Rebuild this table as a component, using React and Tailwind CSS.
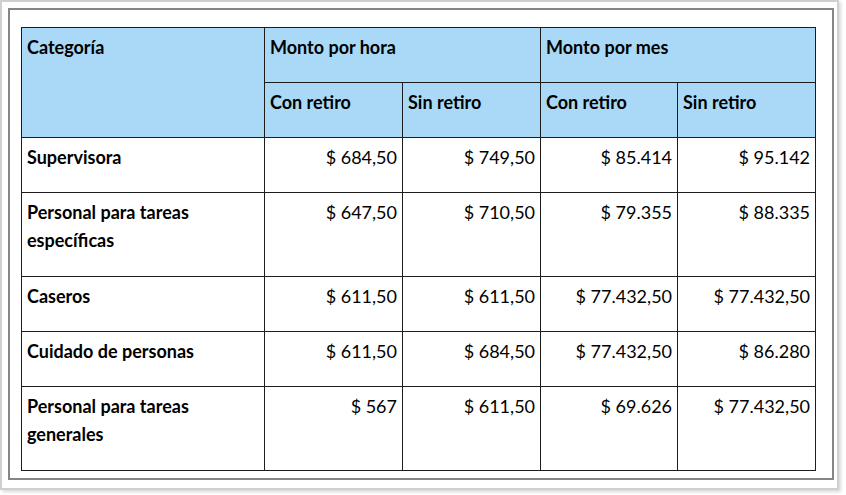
export default function App() {
  const rows = [
    { c: ["Supervisora"], v: ["$ 684,50", "$ 749,50", "$ 85.414", "$ 95.142"], h: "h-[55px]" },
    { c: ["Personal para tareas", "específicas"], v: ["$ 647,50", "$ 710,50", "$ 79.355", "$ 88.335"], h: "h-[84px]" },
    { c: ["Caseros"], v: ["$ 611,50", "$ 611,50", "$ 77.432,50", "$ 77.432,50"], h: "h-[55px]" },
    { c: ["Cuidado de personas"], v: ["$ 611,50", "$ 684,50", "$ 77.432,50", "$ 86.280"], h: "h-[55px]" },
    { c: ["Personal para tareas", "generales"], v: ["$ 567", "$ 611,50", "$ 69.626", "$ 77.432,50"], h: "h-[84px]" },
  ];
  const cell = "border border-[#1c1c1c] align-top pt-[5px] leading-[28px]";
  return (
    <div className="w-[846px] h-[495px] bg-white font-['Lato',sans-serif] text-[18px] text-black">
      <div className="w-[839px] h-[490px] border-2 border-[#cfcfcf] p-[6px] shadow-[2px_2px_3px_rgba(0,0,0,0.15)]">
        <div className="w-[826px] h-[472px] border-2 border-[#858585] pl-[11px] pt-[17px]">
          <table className="table-fixed border-collapse w-[794px]">
            <colgroup>
              <col className="w-[243px]" />
              <col className="w-[138px]" />
              <col className="w-[138px]" />
              <col className="w-[137px]" />
              <col className="w-[138px]" />
            </colgroup>
            <thead>
              <tr className="h-[55px] bg-[#a9d9f6]">
                <th rowSpan={2} className={`${cell} text-left font-bold px-[5px]`}>Categoría</th>
                <th colSpan={2} className={`${cell} text-left font-bold px-[5px]`}>Monto por hora</th>
                <th colSpan={2} className={`${cell} text-left font-bold px-[5px]`}>Monto por mes</th>
              </tr>
              <tr className="h-[55px] bg-[#a9d9f6]">
                <th className={`${cell} text-left font-bold px-[5px]`}>Con retiro</th>
                <th className={`${cell} text-left font-bold px-[5px]`}>Sin retiro</th>
                <th className={`${cell} text-left font-bold px-[5px]`}>Con retiro</th>
                <th className={`${cell} text-left font-bold px-[5px]`}>Sin retiro</th>
              </tr>
            </thead>
            <tbody>
              {rows.map((r, i) => (
                <tr key={i} className={r.h}>
                  <td className={`${cell} font-bold px-[5px]`}>
                    {r.c.map((t, j) => (
                      <div key={j}>{t}</div>
                    ))}
                  </td>
                  {r.v.map((t, j) => (
                    <td key={j} className={`${cell} text-right px-[5px]`}>{t}</td>
                  ))}
                </tr>
              ))}
            </tbody>
          </table>
        </div>
      </div>
    </div>
  );
}
